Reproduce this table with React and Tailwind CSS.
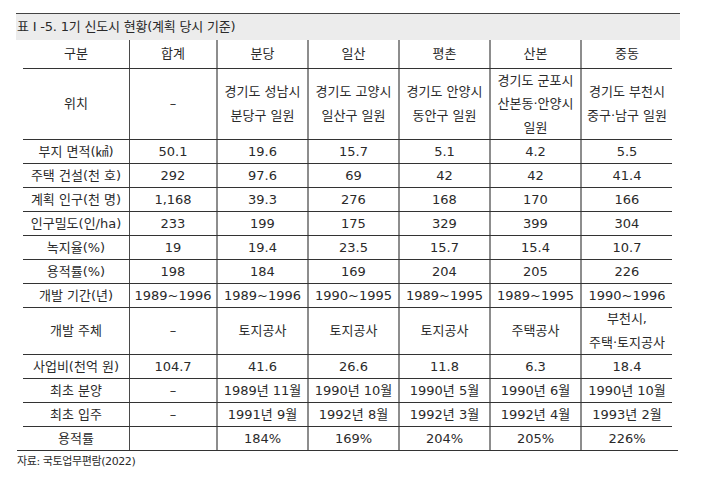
import React from "react";

const W = ["w-[106px]", "w-[87px]", "w-[91px]", "w-[91px]", "w-[91px]", "w-[91px]", "w-[92px]"];
const B = ["", "border-l border-[#4a4a4a]", "border-l-2 border-[#8d8d8d]", "border-l-2 border-[#8d8d8d]", "border-l-2 border-[#8d8d8d]", "border-l-2 border-[#8d8d8d]", "border-l-2 border-[#8d8d8d]"];

const rows = [
  { h: "h-[24px]", cells: ["부지 면적(㎢)", "50.1", "19.6", "15.7", "5.1", "4.2", "5.5"] },
  { h: "h-[24px]", cells: ["주택 건설(천 호)", "292", "97.6", "69", "42", "42", "41.4"] },
  { h: "h-[24px]", cells: ["계획 인구(천 명)", "1,168", "39.3", "276", "168", "170", "166"] },
  { h: "h-[24px]", cells: ["인구밀도(인/ha)", "233", "199", "175", "329", "399", "304"] },
  { h: "h-[24px]", cells: ["녹지율(%)", "19", "19.4", "23.5", "15.7", "15.4", "10.7"] },
  { h: "h-[24px]", cells: ["용적률(%)", "198", "184", "169", "204", "205", "226"] },
  { h: "h-[24px]", cells: ["개발 기간(년)", "1989~1996", "1989~1996", "1990~1995", "1989~1995", "1989~1995", "1990~1996"] },
  { h: "h-[47px]", cells: ["개발 주체", "–", "토지공사", "토지공사", "토지공사", "주택공사", ["부천시,", "주택·토지공사"]] },
  { h: "h-[24px]", cells: ["사업비(천억 원)", "104.7", "41.6", "26.6", "11.8", "6.3", "18.4"] },
  { h: "h-[24px]", cells: ["최초 분양", "–", "1989년 11월", "1990년 10월", "1990년 5월", "1990년 6월", "1990년 10월"] },
  { h: "h-[24px]", cells: ["최초 입주", "–", "1991년 9월", "1992년 8월", "1992년 3월", "1992년 4월", "1993년 2월"] },
];

function Cell({ i, children, lead = "leading-[24px]" }) {
  return (
    <div className={`${W[i]} ${B[i]} shrink-0 flex flex-col items-center justify-center text-center whitespace-nowrap ${lead}`}>
      {Array.isArray(children)
        ? children.map((t, k) => <div key={k}>{t}</div>)
        : <div>{children}</div>}
    </div>
  );
}

function Row({ h, cells, last }) {
  return (
    <div className={`flex ${h} ${last ? "" : "border-b border-[#333]"}`}>
      {cells.map((c, i) => (
        <Cell key={i} i={i}>{c}</Cell>
      ))}
    </div>
  );
}

export default function App() {
  return (
    <div className="w-[707px] h-[478px] bg-white text-[#2a2a2a] text-[13px] font-['DejaVu_Sans','Noto_Sans_CJK_KR',sans-serif]">
      <div className="pt-[13px] pl-[16px] w-[680px]">
        <div className="h-[27px] border-t border-[#444] bg-[#ececec] flex items-center pl-[1px] text-[13px] tracking-[-0.2px]">
          표 I -5. 1기 신도시 현황(계획 당시 기준)
        </div>
        <div className="ml-[7px] w-[649px]">
          <div className="flex h-[29px] border-b border-[#333]">
            {["구분", "합계", "분당", "일산", "평촌", "산본", "중동"].map((c, i) => (
              <Cell key={i} i={i}>{c}</Cell>
            ))}
          </div>
          <div className="flex h-[71px] border-b border-[#333]">
            <Cell i={0}>위치</Cell>
            <Cell i={1}>–</Cell>
            <Cell i={2}>{["경기도 성남시", "분당구 일원"]}</Cell>
            <Cell i={3}>{["경기도 고양시", "일산구 일원"]}</Cell>
            <Cell i={4}>{["경기도 안양시", "동안구 일원"]}</Cell>
            <Cell i={5} lead="leading-[23.5px]">{["경기도 군포시", "산본동·안양시", "일원"]}</Cell>
            <Cell i={6}>{["경기도 부천시", "중구·남구 일원"]}</Cell>
          </div>
          {rows.map((r, k) => (
            <Row key={k} h={r.h} cells={r.cells} />
          ))}
          <Row h="h-[23px]" last cells={["용적률", "", "184%", "169%", "204%", "205%", "226%"]} />
        </div>
        <div className="ml-[1px] w-[661px] h-px bg-[#333]" />
        <div className="pl-[1px] pt-[1px] text-[11px] tracking-[-0.4px] leading-[20px]">
          자료: 국토업무편람(2022)
        </div>
      </div>
    </div>
  );
}
